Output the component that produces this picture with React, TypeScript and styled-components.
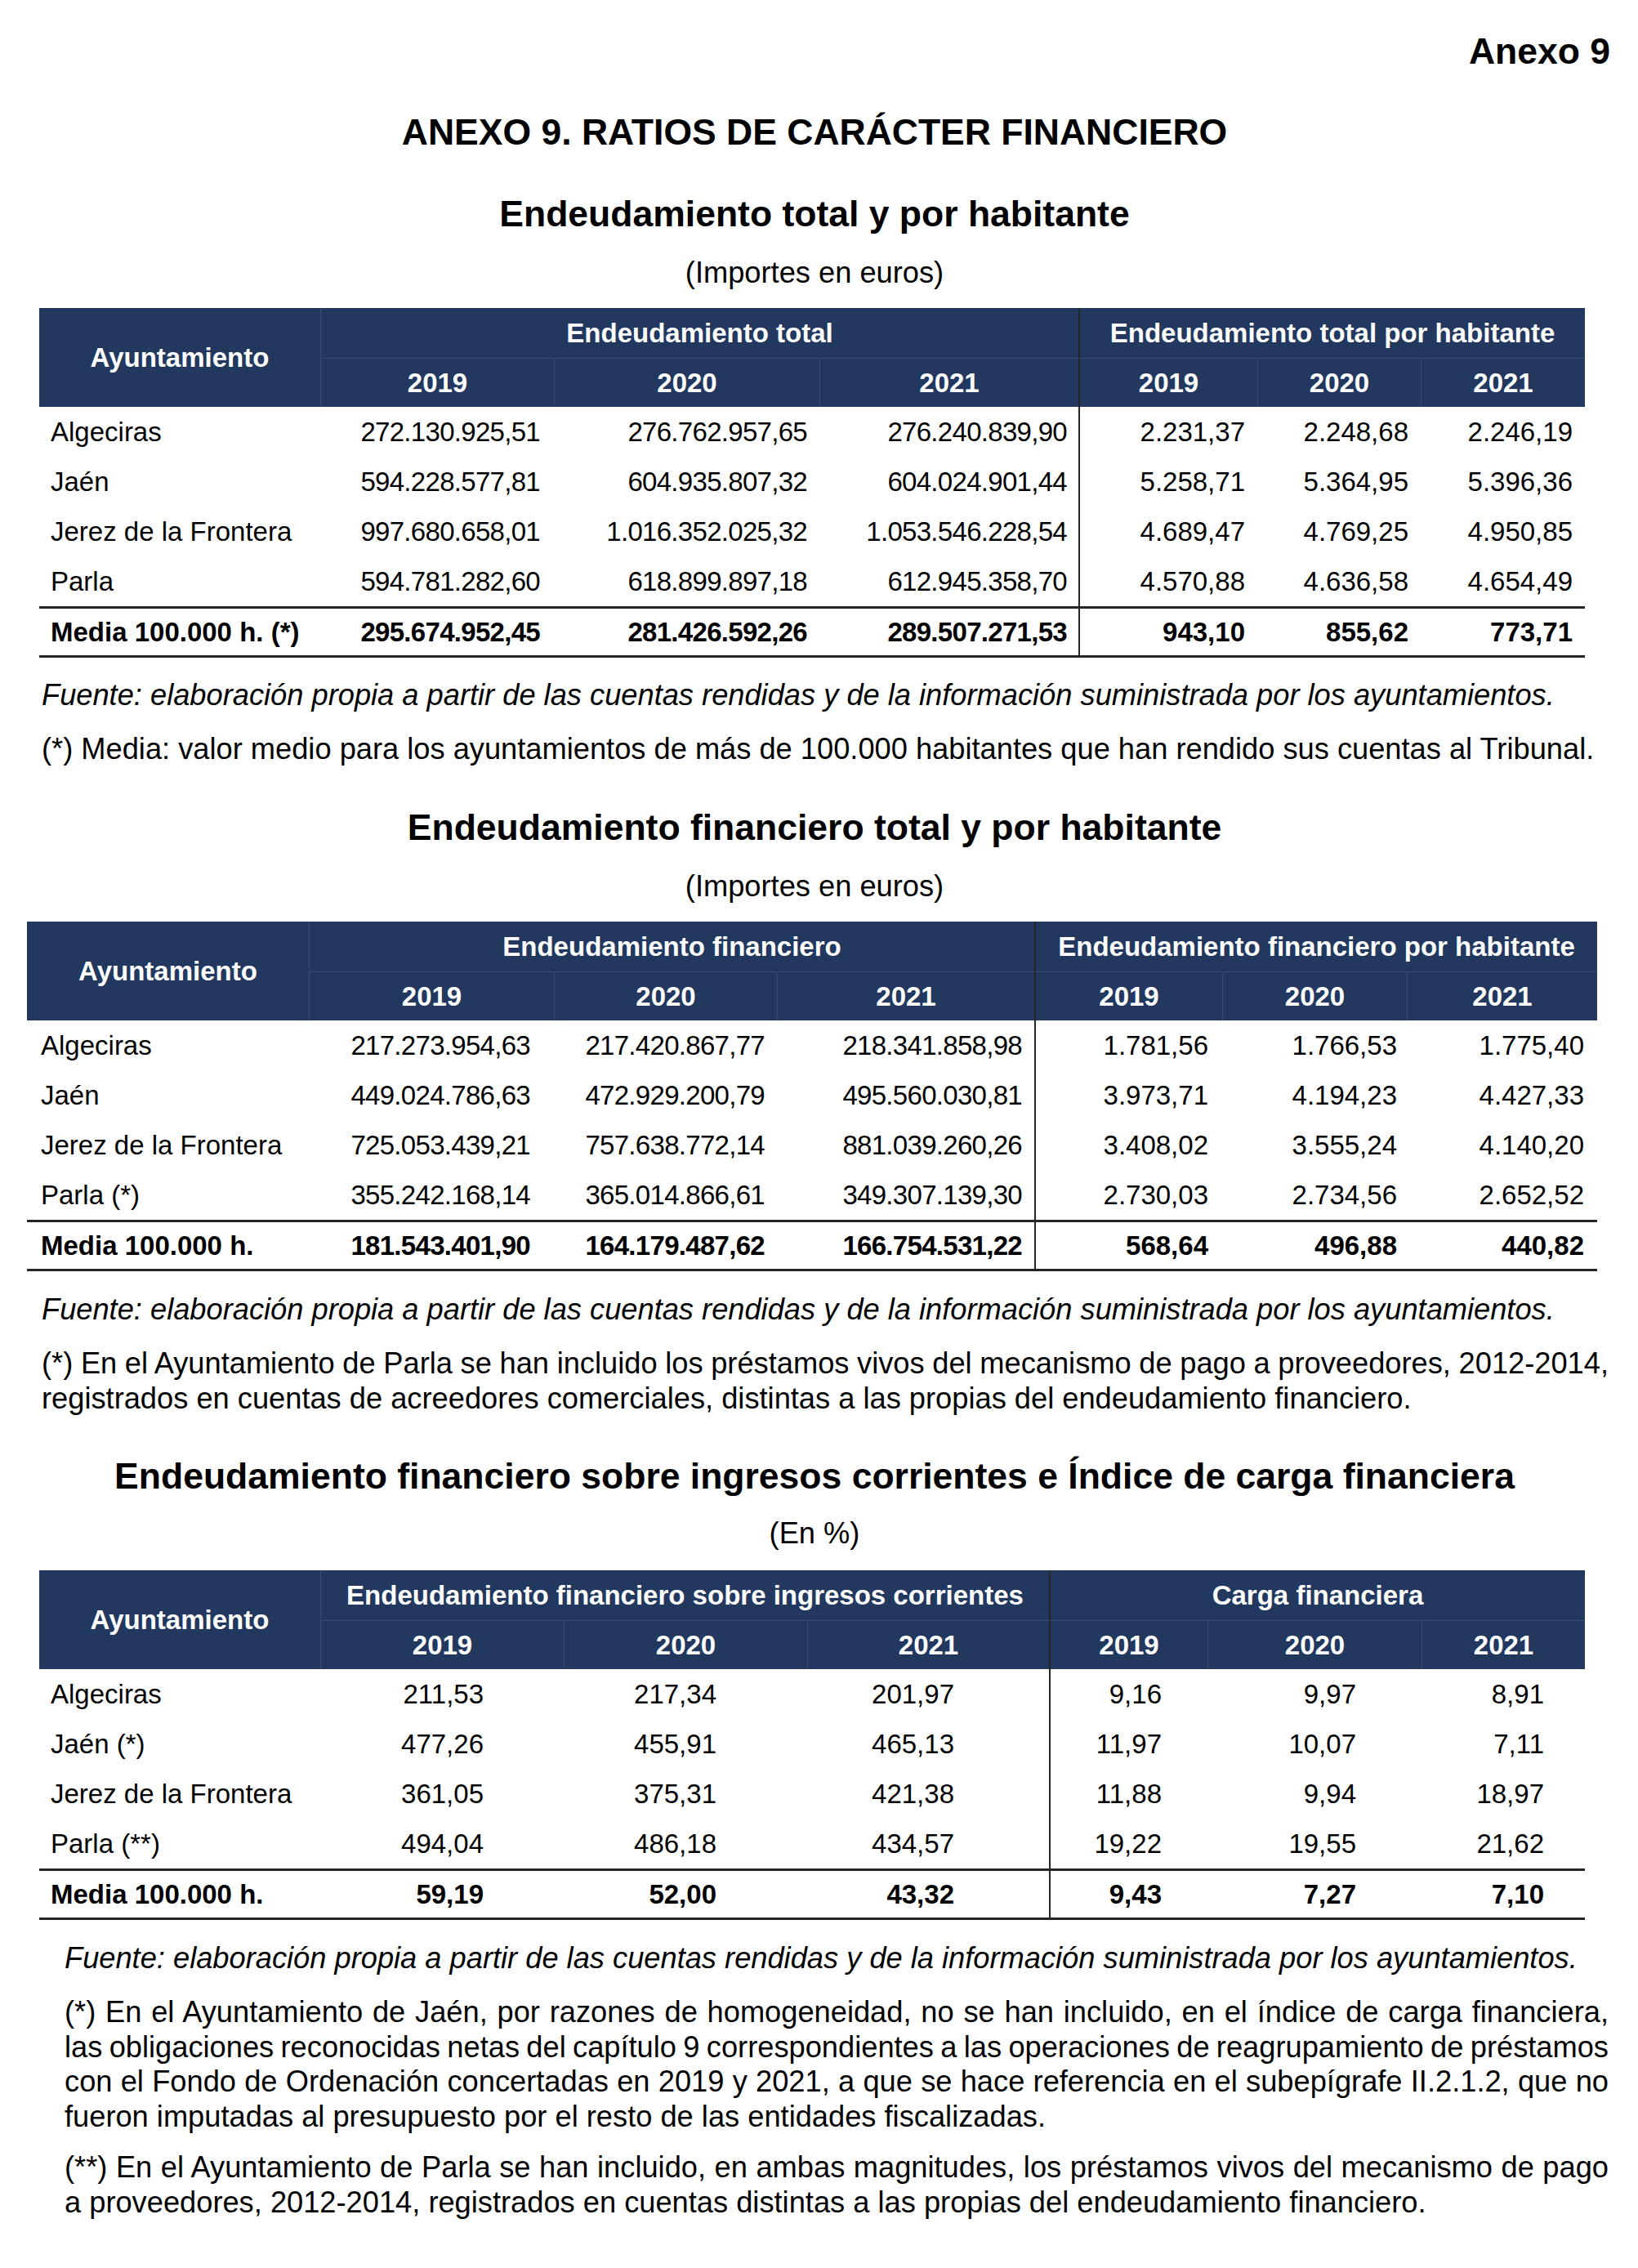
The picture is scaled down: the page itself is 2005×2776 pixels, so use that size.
import React from "react";
import styled, { createGlobalStyle } from "styled-components";

const GlobalStyle = createGlobalStyle`
  *, *::before, *::after { box-sizing: border-box; }
  html, body { margin: 0; padding: 0; background: #ffffff; }
  body { font-family: "Liberation Sans", Arial, sans-serif; color: #000; }
`;

const NAVY = "#22385f";
const FAINT = "rgba(255,255,255,0.10)";
const RULE = "#262626";

const Page = styled.div`
  width: 2005px;
  min-height: 2776px;
  padding: 38px 34px 40px 33px;
  display: flex;
  flex-direction: column;
  font-family: "Liberation Sans", Arial, sans-serif;
  color: #000;
`;

const AnnexTag = styled.div`
  align-self: flex-end;
  font-size: 44.5px;
  font-weight: 700;
  line-height: 50px;
`;

const Heading = styled.h2<{ $gap: number }>`
  margin: ${(p) => p.$gap}px 0 0;
  padding-right: 10px;
  text-align: center;
  font-size: 44.5px;
  font-weight: 700;
  line-height: 50px;
`;

const Units = styled.div<{ $gap: number }>`
  margin-top: ${(p) => p.$gap}px;
  padding-right: 10px;
  text-align: center;
  font-size: 36.25px;
  line-height: 42px;
`;

const Grid = styled.div<{ $cols: string; $indent: number; $gap: number }>`
  display: grid;
  grid-template-columns: ${(p) => p.$cols};
  grid-template-rows: 61px 60px repeat(4, 61px) 63px;
  margin: ${(p) => p.$gap}px 0 0 ${(p) => p.$indent}px;
  width: fit-content;
  font-size: 33px;
  line-height: 38px;
`;

const HeadBase = styled.div`
  background: ${NAVY};
  color: #ffffff;
  font-weight: 700;
  display: flex;
  align-items: center;
  justify-content: center;
  white-space: nowrap;
`;

const CornerHead = styled(HeadBase)`
  grid-row: span 2;
`;

const GroupHead = styled(HeadBase)<{ $divider?: boolean }>`
  grid-column: span 3;
  border-left: ${(p) => (p.$divider ? `2px solid ${RULE}` : `1px solid ${FAINT}`)};
`;

const YearHead = styled(HeadBase)<{ $divider?: boolean }>`
  border-top: 1px solid ${FAINT};
  border-left: ${(p) => (p.$divider ? `2px solid ${RULE}` : `1px solid ${FAINT}`)};
`;

const BodyCell = styled.div<{ $total?: boolean; $divider?: boolean }>`
  display: flex;
  align-items: center;
  white-space: nowrap;
  font-weight: ${(p) => (p.$total ? 700 : 400)};
  border-top: ${(p) => (p.$total ? `3px solid ${RULE}` : "none")};
  border-bottom: ${(p) => (p.$total ? `3px solid ${RULE}` : "none")};
  border-left: ${(p) => (p.$divider ? `2px solid ${RULE}` : "none")};
`;

const NameCell = styled(BodyCell)<{ $pad: number }>`
  justify-content: flex-start;
  padding-left: ${(p) => p.$pad}px;
`;

const ValueCell = styled(BodyCell)<{ $pad: number; $tight?: boolean }>`
  justify-content: flex-end;
  padding-right: ${(p) => p.$pad}px;
  letter-spacing: ${(p) => (p.$tight ? "-0.7px" : "0")};
`;

const Notes = styled.div<{ $indent: number; $gap: number; $right: number }>`
  margin: ${(p) => p.$gap}px 0 0 ${(p) => p.$indent}px;
  width: ${(p) => p.$right - 33 - p.$indent}px;
  font-size: 36.25px;
  line-height: 42.5px;
`;

const Source = styled.p`
  margin: 0;
  font-style: italic;
`;

const Note = styled.p<{ $gap: number }>`
  margin: ${(p) => p.$gap}px 0 0;
`;

const JustLine = styled.span`
  display: block;
  white-space: nowrap;
  text-align: justify;
  text-align-last: justify;
  word-spacing: -4px;
`;

const LastLine = styled.span`
  display: block;
`;

type Col = { width: number; pad: number };
type Row = { name: string; values: string[] };
type TableSpec = {
  indent: number;
  nameWidth: number;
  namePad: number;
  groups: [string, string];
  cols: Col[];
  rows: Row[];
  total: Row;
};

const YEARS = ["2019", "2020", "2021"];

function DataTable({ spec, gap }: { spec: TableSpec; gap: number }) {
  const template = [spec.nameWidth, ...spec.cols.map((c) => c.width)].map((w) => `${w}px`).join(" ");
  const renderRow = (row: Row, total: boolean) => (
    <React.Fragment key={row.name}>
      <NameCell $pad={spec.namePad} $total={total}>
        {row.name}
      </NameCell>
      {row.values.map((v, i) => (
        <ValueCell
          key={i}
          $pad={spec.cols[i].pad}
          $divider={i === 3}
          $total={total}
          $tight={v.length >= 12}
        >
          {v}
        </ValueCell>
      ))}
    </React.Fragment>
  );
  return (
    <Grid $cols={template} $indent={spec.indent} $gap={gap}>
      <CornerHead>Ayuntamiento</CornerHead>
      <GroupHead>{spec.groups[0]}</GroupHead>
      <GroupHead $divider>{spec.groups[1]}</GroupHead>
      {spec.cols.map((_, i) => (
        <YearHead key={i} $divider={i === 3}>
          {YEARS[i % 3]}
        </YearHead>
      ))}
      {spec.rows.map((r) => renderRow(r, false))}
      {renderRow(spec.total, true)}
    </Grid>
  );
}

const table1: TableSpec = {
  indent: 15,
  nameWidth: 344,
  namePad: 14,
  groups: ["Endeudamiento total", "Endeudamiento total por habitante"],
  cols: [
    { width: 286, pad: 17 },
    { width: 325, pad: 15 },
    { width: 317, pad: 14 },
    { width: 219, pad: 15 },
    { width: 200, pad: 15 },
    { width: 201, pad: 15 },
  ],
  rows: [
    { name: "Algeciras", values: ["272.130.925,51", "276.762.957,65", "276.240.839,90", "2.231,37", "2.248,68", "2.246,19"] },
    { name: "Jaén", values: ["594.228.577,81", "604.935.807,32", "604.024.901,44", "5.258,71", "5.364,95", "5.396,36"] },
    { name: "Jerez de la Frontera", values: ["997.680.658,01", "1.016.352.025,32", "1.053.546.228,54", "4.689,47", "4.769,25", "4.950,85"] },
    { name: "Parla", values: ["594.781.282,60", "618.899.897,18", "612.945.358,70", "4.570,88", "4.636,58", "4.654,49"] },
  ],
  total: { name: "Media 100.000 h. (*)", values: ["295.674.952,45", "281.426.592,26", "289.507.271,53", "943,10", "855,62", "773,71"] },
};

const table2: TableSpec = {
  indent: 0,
  nameWidth: 345,
  namePad: 17,
  groups: ["Endeudamiento financiero", "Endeudamiento financiero por habitante"],
  cols: [
    { width: 300, pad: 29 },
    { width: 273, pad: 15 },
    { width: 315, pad: 15 },
    { width: 230, pad: 17 },
    { width: 226, pad: 12 },
    { width: 233, pad: 16 },
  ],
  rows: [
    { name: "Algeciras", values: ["217.273.954,63", "217.420.867,77", "218.341.858,98", "1.781,56", "1.766,53", "1.775,40"] },
    { name: "Jaén", values: ["449.024.786,63", "472.929.200,79", "495.560.030,81", "3.973,71", "4.194,23", "4.427,33"] },
    { name: "Jerez de la Frontera", values: ["725.053.439,21", "757.638.772,14", "881.039.260,26", "3.408,02", "3.555,24", "4.140,20"] },
    { name: "Parla (*)", values: ["355.242.168,14", "365.014.866,61", "349.307.139,30", "2.730,03", "2.734,56", "2.652,52"] },
  ],
  total: { name: "Media 100.000 h.", values: ["181.543.401,90", "164.179.487,62", "166.754.531,22", "568,64", "496,88", "440,82"] },
};

const table3: TableSpec = {
  indent: 15,
  nameWidth: 344,
  namePad: 14,
  groups: ["Endeudamiento financiero sobre ingresos corrientes", "Carga financiera"],
  cols: [
    { width: 298, pad: 98 },
    { width: 298, pad: 111 },
    { width: 296, pad: 116 },
    { width: 194, pad: 56 },
    { width: 262, pad: 80 },
    { width: 200, pad: 50 },
  ],
  rows: [
    { name: "Algeciras", values: ["211,53", "217,34", "201,97", "9,16", "9,97", "8,91"] },
    { name: "Jaén (*)", values: ["477,26", "455,91", "465,13", "11,97", "10,07", "7,11"] },
    { name: "Jerez de la Frontera", values: ["361,05", "375,31", "421,38", "11,88", "9,94", "18,97"] },
    { name: "Parla (**)", values: ["494,04", "486,18", "434,57", "19,22", "19,55", "21,62"] },
  ],
  total: { name: "Media 100.000 h.", values: ["59,19", "52,00", "43,32", "9,43", "7,27", "7,10"] },
};

const SOURCE =
  "Fuente: elaboración propia a partir de las cuentas rendidas y de la información suministrada por los ayuntamientos.";

export default function App() {
  return (
    <>
      <GlobalStyle />
      <Page>
        <AnnexTag>Anexo 9</AnnexTag>
        <Heading $gap={49}>ANEXO 9. RATIOS DE CARÁCTER FINANCIERO</Heading>

        <Heading $gap={50}>Endeudamiento total y por habitante</Heading>
        <Units $gap={26}>(Importes en euros)</Units>
        <DataTable spec={table1} gap={22} />
        <Notes $indent={18} $gap={25} $right={1969}>
          <Source>{SOURCE}</Source>
          <Note $gap={23.5}>
            (*) Media: valor medio para los ayuntamientos de más de 100.000 habitantes que han rendido sus cuentas al Tribunal.
          </Note>
        </Notes>

        <Heading $gap={49.5}>Endeudamiento financiero total y por habitante</Heading>
        <Units $gap={26}>(Importes en euros)</Units>
        <DataTable spec={table2} gap={22} />
        <Notes $indent={18} $gap={26} $right={1969}>
          <Source>{SOURCE}</Source>
          <Note $gap={23.5}>
            <JustLine>
              (*) En el Ayuntamiento de Parla se han incluido los préstamos vivos del mecanismo de pago a proveedores, 2012-2014,
            </JustLine>
            <LastLine>
              registrados en cuentas de acreedores comerciales, distintas a las propias del endeudamiento financiero.
            </LastLine>
          </Note>
        </Notes>

        <Heading $gap={49}>
          Endeudamiento financiero sobre ingresos corrientes e Índice de carga financiera
        </Heading>
        <Units $gap={24}>(En %)</Units>
        <DataTable spec={table3} gap={24} />
        <Notes $indent={46} $gap={26} $right={1969}>
          <Source>{SOURCE}</Source>
          <Note $gap={23.5}>
            <JustLine>
              (*) En el Ayuntamiento de Jaén, por razones de homogeneidad, no se han incluido, en el índice de carga financiera,
            </JustLine>
            <JustLine>
              las obligaciones reconocidas netas del capítulo 9 correspondientes a las operaciones de reagrupamiento de préstamos
            </JustLine>
            <JustLine>
              con el Fondo de Ordenación concertadas en 2019 y 2021, a que se hace referencia en el subepígrafe II.2.1.2, que no
            </JustLine>
            <LastLine>fueron imputadas al presupuesto por el resto de las entidades fiscalizadas.</LastLine>
          </Note>
          <Note $gap={20}>
            <JustLine>
              (**) En el Ayuntamiento de Parla se han incluido, en ambas magnitudes, los préstamos vivos del mecanismo de pago
            </JustLine>
            <LastLine>
              a proveedores, 2012-2014, registrados en cuentas distintas a las propias del endeudamiento financiero.
            </LastLine>
          </Note>
        </Notes>
      </Page>
    </>
  );
}
